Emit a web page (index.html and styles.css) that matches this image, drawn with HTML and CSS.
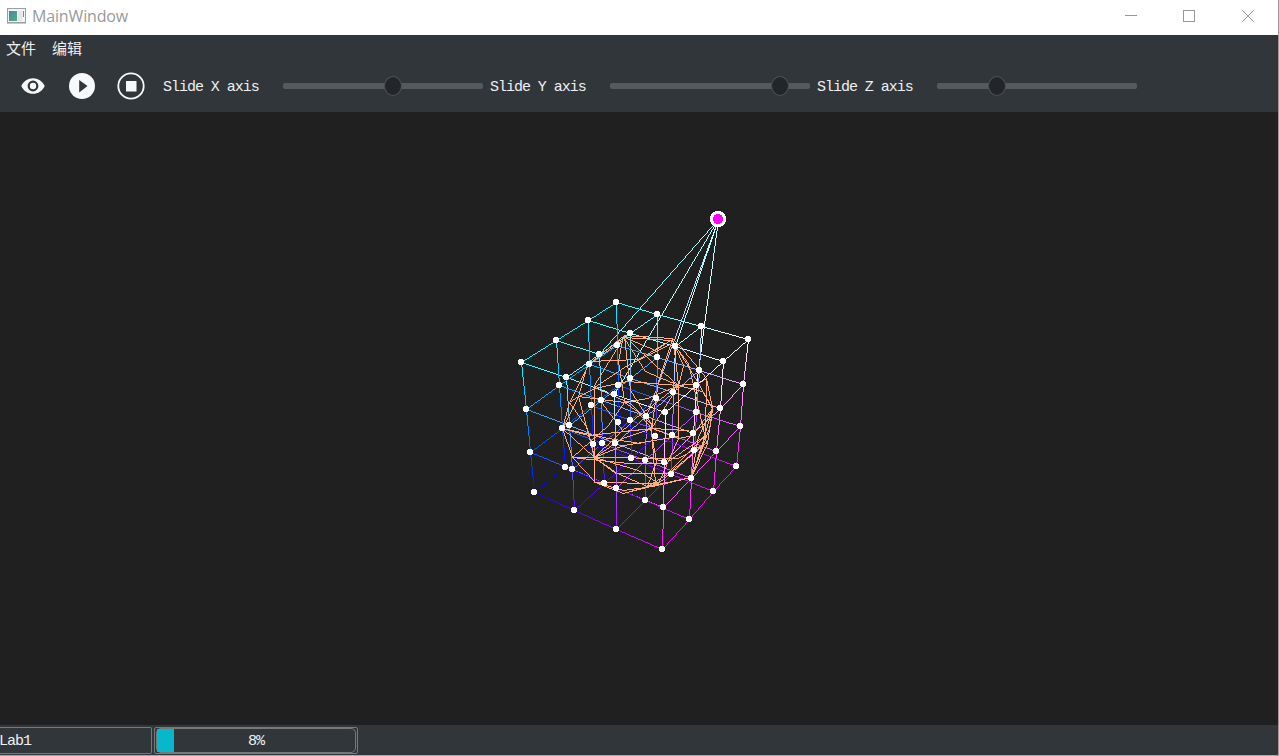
FILE: index.html
```html
<!DOCTYPE html>
<html lang="zh">
<head>
<meta charset="utf-8">
<title>MainWindow</title>
<link rel="stylesheet" href="styles.css">
</head>
<body>
<div class="window">
  <header class="titlebar">
    <svg class="app-icon" width="19" height="16" viewBox="0 0 19 16">
      <defs><linearGradient id="pane" x1="0" y1="0" x2="1" y2="1"><stop offset="0" stop-color="#4b82a5"/><stop offset="1" stop-color="#55ad83"/></linearGradient></defs>
      <rect x=".5" y=".5" width="18" height="14" fill="#f3f4f5" stroke="#9a9fa3"/>
      <path d="M0 15.500H19" stroke="#c8c8c8"/>
      <rect x="2" y="3" width="8" height="10" fill="url(#pane)"/>
      <rect x="11" y="3" width="4" height="10" fill="#e5e6e7"/>
      <rect x="16" y="3" width="1" height="6" fill="#579399"/>
    </svg>
    <span class="title">MainWindow</span>
    <svg class="controls" width="130" height="14" viewBox="0 0 130 14" fill="none" stroke="#999">
      <path d="M0 6.500H12"/><rect x="58.500" y="1.500" width="11" height="11"/><path d="M117 1L129 13M129 1L117 13"/>
    </svg>
  </header>
  <nav class="menubar"><span>文件</span><span>编辑</span></nav>
  <div class="toolbar">
    <svg class="tool eye" width="24" height="18" viewBox="0 0 24 18"><path fill-rule="evenodd" fill="#f7f8fa" d="M12 1.200C7 1.200 2.500 4 .3 9c2.200 5 6.700 7.800 11.700 7.800S21.500 14 23.700 9C21.500 4 17 1.200 12 1.200zM12 14.400a5.400 5.400 0 1 1 0-10.800 5.400 5.400 0 0 1 0 10.800z"/><circle cx="12" cy="9" r="3.200" fill="#f7f8fa"/></svg>
    <svg class="tool play" width="26" height="26" viewBox="0 0 26 26"><circle cx="13" cy="13" r="13" fill="#f7f8fa"/><path d="M10.200 7v12.500L18.500 13z" fill="#31363b"/></svg>
    <svg class="tool stop" width="28" height="28" viewBox="0 0 28 28"><circle cx="14" cy="14" r="12.700" fill="none" stroke="#f7f8fa" stroke-width="1.800"/><rect x="9" y="9" width="10.500" height="10.500" fill="#f7f8fa"/></svg>
    <div class="axis"><span class="mono">Slide X axis</span><div class="slider"><i class="knob" style="left:101px"></i></div></div>
    <div class="axis"><span class="mono">Slide Y axis</span><div class="slider"><i class="knob" style="left:161px"></i></div></div>
    <div class="axis"><span class="mono">Slide Z axis</span><div class="slider"><i class="knob" style="left:51px"></i></div></div>
  </div>
  <canvas id="scene" class="scene" width="1278" height="613"></canvas>
  <footer class="statusbar">
    <div class="label mono">Lab1</div>
    <div class="progress-frame"><div class="progress mono"><i class="fill" style="width:17px"></i><span>8%</span></div></div>
  </footer>
</div>
<script src="scene.js"></script>
</body>
</html>
```
FILE: styles.css
```css
body {
  margin: 0;
  background: #a5a6a6;
  overflow: hidden;
}
.window {
  width: 1278px;
  height: 755px;
  border-right: 1px solid #9a9a9a;
  border-bottom: 1px solid #a5a6a6;
  display: flex;
  flex-direction: column;
  background: #31363b;
}
.titlebar {
  height: 35px;
  background: #fff;
  display: flex;
  align-items: center;
  padding: 0 23px 3px 7px;
  box-sizing: border-box;
}
.title {
  font: 16px/22px "Open Sans", "Noto Sans", sans-serif;
  letter-spacing: -0.15px;
  color: #999;
  margin-left: 6px;
}
.controls {
  margin-left: auto;
}
.menubar {
  height: 26px;
  display: flex;
  gap: 16px;
  padding-left: 6px;
  font: 15px/26px "Noto Sans CJK SC", sans-serif;
  color: #eff0f1;
}
.toolbar {
  height: 51px;
  display: flex;
  align-items: center;
  padding: 0 0 2px 21px;
  box-sizing: border-box;
}
.play { margin-left: 24px; }
.stop { margin: 0 18px 0 22px; }
.mono {
  font-family: "Liberation Mono", monospace;
  font-size: 15px;
  letter-spacing: -1.03px;
  color: #eff0f1;
  white-space: pre;
}
.axis {
  display: flex;
  align-items: center;
  width: 320px;
  margin-right: 7px;
  justify-content: space-between;
}
.axis .mono {
  padding-top: 4px;
}
.slider {
  width: 200px;
  height: 6px;
  border-radius: 2px;
  background: #565a5e;
  position: relative;
}
.knob {
  position: absolute;
  top: -7px;
  width: 16px;
  height: 18px;
  border: 1px solid #4d5154;
  border-radius: 50%;
  background: #232629;
}
.scene {
  display: block;
  width: 1278px;
  height: 613px;
  background: #202020;
}
.statusbar {
  height: 30px;
  display: flex;
  padding-top: 2px;
  box-sizing: border-box;
}
.label {
  width: 152px;
  height: 27px;
  box-sizing: border-box;
  border: 1px solid #76797c;
  border-left: 0;
  border-radius: 0 2px 2px 0;
  line-height: 28px;
  text-indent: -1px;
}
.progress-frame {
  width: 204px;
  height: 27px;
  box-sizing: border-box;
  border: 1px solid #76797c;
  border-radius: 2px;
  margin-left: 2px;
  padding: 0 1px;
}
.progress {
  height: 25px;
  box-sizing: border-box;
  border: 1px solid #76797c;
  border-radius: 5px;
  position: relative;
  text-align: center;
  line-height: 26px;
}
.fill {
  position: absolute;
  left: 0;
  top: 0;
  height: 23px;
  background: #05b8cc;
}
```
FILE: scene.js
```js
const canvas = document.getElementById('scene');
const ctx = canvas.getContext('2d');
ctx.translate(0, -112);

// Pixel line with linearly interpolated end colours.
function line(a, b, ca, cb) {
  const n = Math.max(Math.abs(b[0] - a[0]), Math.abs(b[1] - a[1]), 1);
  for (let s = 0; s <= n; s++) {
    const t = s / n;
    const c = ca.map((v, i) => Math.round(v + (cb[i] - v) * t));
    ctx.fillStyle = `rgb(${c})`;
    ctx.fillRect(Math.round(a[0] + (b[0] - a[0]) * t), Math.round(a[1] + (b[1] - a[1]) * t), 1, 1);
  }
}

// Control lattice: layer (top to bottom), depth row, column.
const lattice = [
  [[[521,362],[566,377],[614,394],[665,412]],
   [[556,340],[599,354],[718,219],[696,385]],
   [[588,320],[630,333],[675,346],[723,361]],
   [[616,302],[657,314],[701,326],[748,339]]],
  [[[526,409],[569,425],[615,443],[664,462]],
   [[559,385],[601,400],[646,416],[693,433]],
   [[589,364],[630,378],[673,392],[720,408]],
   [[617,345],[657,357],[699,370],[743,384]]],
  [[[530,452],[572,469],[616,488],[663,507]],
   [[562,428],[602,443],[645,460],[691,478]],
   [[591,405],[630,420],[672,435],[716,451]],
   [[618,385],[656,398],[696,412],[740,426]]],
  [[[534,492],[574,510],[616,529],[662,549]],
   [[565,467],[604,483],[645,500],[689,519]],
   [[593,444],[631,458],[671,474],[713,491]],
   [[618,422],[655,436],[694,450],[736,466]]]
];
const colour = (l, d, c) => [l === 0 ? Math.min(255, c * 85 + 20) : c * 85, 255 - l * 85, 255];

for (let l = 0; l < 4; l++) for (let d = 0; d < 4; d++) for (let c = 0; c < 4; c++) {
  for (const [x, y, z] of [[l + 1, d, c], [l, d + 1, c], [l, d, c + 1]]) {
    if (x > 3 || y > 3 || z > 3) continue;
    line(lattice[l][d][c], lattice[x][y][z], colour(l, d, c), colour(x, y, z));
  }
}

// Sphere wireframe, in thirds of a pixel from its own origin.
const mesh = [
  [207,22,352,30,372,50,428,120,452,150,470,240,455,345,408,448,308,467,205,495,120,462,52,388,22,300,42,222,100,108,207,22],
  [207,28,345,36,300,65,207,28],
  [100,108,200,35,190,100,207,220],
  [207,25,225,185,290,292],
  [207,25,117,170,117,462],
  [352,34,250,92,100,100,68,203,117,387],
  [68,203,22,300,42,222,68,203,118,180,215,160,370,172],
  [68,203,207,222,275,210,370,172],
  [118,178,215,110,355,42],
  [118,178,225,225,290,292],
  [225,40,300,110,370,172],
  [352,32,310,160,288,300,300,465],
  [355,40,370,172,370,330,308,465],
  [370,172,430,165,452,150,450,320,408,448],
  [360,50,428,165],
  [370,172,330,235,288,300],
  [370,172,270,130,207,30],
  [360,55,400,105,415,170,452,345],
  [352,36,385,110,370,172],
  [370,172,440,190,470,240],
  [470,240,410,320,370,330,292,300],
  [470,240,430,325,408,448,290,470],
  [470,240,465,290,408,448],
  [430,165,470,240,440,345,408,448],
  [22,300,100,320,292,300,400,305],
  [22,300,160,330,255,345],
  [117,387,200,330,292,300],
  [117,387,205,350,370,325],
  [117,387,240,270,370,172],
  [450,345,308,465],
  [450,320,330,405],
  [52,388,117,387,370,390,450,345],
  [52,388,220,405,330,405],
  [117,387,185,435,275,475,308,465],
  [117,387,250,425,308,465],
  [52,388,120,462,308,465],
  [120,462,205,485,290,475,408,448],
  [117,387,180,435,340,435,440,350],
  [205,495,275,475,330,440,450,320],
  [275,475,302,400,285,300],
  [42,222,95,300,117,387],
  [52,388,160,290,207,222],
  [207,222,245,250,288,300],
  [22,300,68,203],
  [22,300,117,387],
  [130,210,205,310,292,300]
];
const sand = [255, 174, 126];
for (const poly of mesh) {
  for (let i = 0; i + 3 < poly.length; i += 2) {
    line([555 + Math.round(poly[i] / 3), 328 + Math.round(poly[i + 1] / 3)],
         [555 + Math.round(poly[i + 2] / 3), 328 + Math.round(poly[i + 3] / 3)], sand, sand);
  }
}

// Near edges of the lattice stay in front of the sphere.
for (const [a, b] of [[[0,0,3],[0,1,3]], [[0,1,3],[0,2,3]], [[0,0,2],[1,0,2]], [[0,0,3],[1,0,3]], [[1,0,2],[2,0,2]], [[1,0,3],[2,0,3]], [[0,1,2],[0,2,2]]]) {
  line(lattice[a[0]][a[1]][a[2]], lattice[b[0]][b[1]][b[2]], colour(...a), colour(...b));
}

function disc(x, y, r, fill) {
  ctx.fillStyle = fill;
  for (let j = -r; j < r; j++) {
    const half = Math.round(Math.sqrt(r * r - (j + 0.5) * (j + 0.5)));
    ctx.fillRect(x - half, y + j, half * 2, 1);
  }
}
for (const layer of lattice) for (const row of layer) for (const p of row) {
  disc(p[0], p[1], 3, '#fff');
}
disc(718, 219, 8, '#fff');
disc(718, 219, 5, '#f0f');
```
